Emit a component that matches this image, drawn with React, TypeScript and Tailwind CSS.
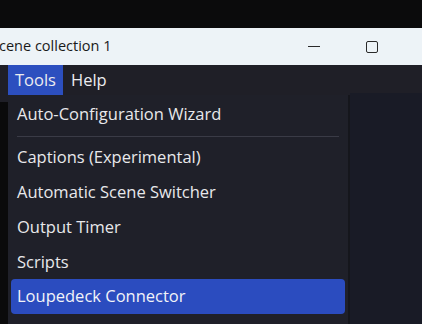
import React from 'react';

const items = [
  'Captions (Experimental)',
  'Automatic Scene Switcher',
  'Output Timer',
  'Scripts',
];

const App: React.FC = () => {
  return (
    <div
      className="w-[422px] h-[324px] overflow-hidden bg-[#0b0b0b] flex flex-col"
      style={{ fontFamily: '"Open Sans", "Noto Sans", sans-serif' }}
    >
      <div className="h-[28px] shrink-0 bg-[#0b0b0c]" />

      {/* title bar */}
      <div className="h-[37px] shrink-0 bg-[#edf3f7] flex items-center text-[#1a1a1a]">
        <span className="text-[14.5px] leading-none -ml-[1px]">cene collection 1</span>
        <div className="flex-1" />
        <div className="w-[12px] h-px bg-[#2a2a2a] mr-[46px]" />
        <div className="w-[12px] h-[12px] border border-[#2a2a2a] rounded-[2px] mr-[44px]" />
      </div>

      {/* menu bar */}
      <div className="h-[30px] shrink-0 bg-[#1f1f27] flex items-stretch text-[16.5px] text-[#ececef]">
        <div className="ml-[8px] w-[55px] bg-[#2c4fbf] flex items-center justify-center">Tools</div>
        <div className="ml-[8px] flex items-center">Help</div>
      </div>

      <div className="flex-1 flex">
        <div className="w-[8px] flex flex-col">
          <div className="h-[7px] bg-[#1f1f27]" />
          <div className="flex-1 bg-[#0a0a0b]" />
        </div>

        {/* dropdown */}
        <div className="w-[340px] bg-[#1f2029] pt-[2px] text-[16.5px] text-[#e8e8eb]">
          <div className="h-[35px] flex items-center pl-[9px]">Auto-Configuration Wizard</div>
          <div className="h-[8px] flex items-center px-[9px]">
            <div className="h-px w-full bg-[#3a3b46]" />
          </div>
          {items.map((label) => (
            <div key={label} className="h-[35px] flex items-center pl-[9px]">
              {label}
            </div>
          ))}
          <div className="h-[35px] mx-[3px] mt-[-1px] rounded-[4px] bg-[#2b4cbf] flex items-center pl-[6px] text-[#f2f3f8]">
            Loupedeck Connector
          </div>
        </div>

        <div className="w-[2px] bg-[#15161c]" />
        <div className="flex-1 -mt-[2px] bg-[#191b26]" />
      </div>
    </div>
  );
};

export default App;
